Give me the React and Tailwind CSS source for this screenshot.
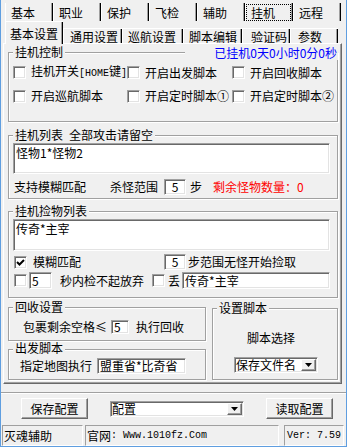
import React from "react"

const cjk = "font-['Noto_Sans_CJK_SC',sans-serif]"
const mono = "font-['Liberation_Mono',monospace]"

// classic win32 3D edges
const sunken =
  "bg-white border border-t-[#a0a0a0] border-l-[#a0a0a0] border-r-white border-b-white shadow-[inset_1px_1px_0_#696969,inset_-1px_-1px_0_#e3e3e3]"
const raised =
  "bg-[#f0f0f0] border border-t-white border-l-white border-r-[#696969] border-b-[#696969] shadow-[inset_-1px_-1px_0_#a0a0a0]"

const topTabs = ["基本", "职业", "保护", "飞检", "辅助", "挂机", "远程"]

const subTabs = [
  { name: "通用设置", cls: "w-[59px] pl-[6px]" },
  { name: "巡航设置", cls: "w-[61px] pl-[5px]" },
  { name: "脚本编辑", cls: "w-[59px] pl-[5px]" },
  { name: "验证码", cls: "w-[48px] pl-[8px]" },
  { name: "参数", cls: "w-[48px] pl-[7px]" },
]

function Check({ checked }) {
  return (
    <div className={`flex-none w-[13px] h-[13px] flex items-center justify-center ${sunken}`}>
      {checked && (
        <svg width="9" height="9" viewBox="0 0 9 9">
          <path d="M1 4 L3.5 6.5 L8 2" stroke="#000" strokeWidth="2" fill="none" />
        </svg>
      )}
    </div>
  )
}

function CheckItem({ label, checked }) {
  return (
    <div className="flex items-center gap-[5px] whitespace-nowrap">
      <Check checked={checked} />
      <span>{label}</span>
    </div>
  )
}

function Arrow() {
  return (
    <svg width="7" height="4" viewBox="0 0 7 4">
      <path d="M0 0 H7 L3.5 4 Z" fill="#000" />
    </svg>
  )
}

function Group({ title, className, titleTop = "-top-[7px]", children }) {
  return (
    <div className={`relative border border-[#a0a0a0] shadow-[inset_1px_1px_0_#fff,1px_1px_0_#fff] ${className}`}>
      <span className={`absolute ${titleTop} left-[4px] px-[2px] leading-[12px] bg-[#f0f0f0] whitespace-nowrap`}>{title}</span>
      {children}
    </div>
  )
}

export default function App() {
  return (
    <div
      className={`w-[347px] h-[447px] bg-[#f0f0f0] border-x border-b border-[#5f9ee0] text-[12px] leading-[14px] text-black overflow-hidden ${cjk}`}
    >
      {/* top tab row */}
      <div className="flex h-[21px] pt-[3px] pl-[4px]">
        {topTabs.map((t) => (
          <div
            key={t}
            className="relative w-[48px] h-[18px] pl-[5px] pt-[2px] leading-[16px] border-l border-white shadow-[inset_-1px_0_0_#000,inset_-2px_0_0_#a0a0a0]"
          >
            {t === "挂机" && <div className="absolute top-[1px] bottom-0 left-0 right-[2px] border border-dotted border-black" />}
            {t}
          </div>
        ))}
      </div>

      {/* second tab row */}
      <div className="flex items-end h-[22px] pl-[4px]">
        <div className="relative z-10 -mb-px w-[58px] h-[23px] pl-[4px] pt-[5px] bg-[#f0f0f0] border-t border-l border-white shadow-[inset_-1px_0_0_#000,inset_-2px_0_0_#a0a0a0]">
          基本设置
        </div>
        {subTabs.map((t) => (
          <div
            key={t.name}
            className={`h-[15px] pt-[1px] leading-[14px] border-t border-l border-white shadow-[inset_-1px_0_0_#000,inset_-2px_0_0_#a0a0a0] ${t.cls}`}
          >
            {t.name}
          </div>
        ))}
      </div>

      {/* tab page */}
      <div className="ml-[2px] w-[339px] h-[341px] border border-t-white border-l-white border-r-[#696969] border-b-[#696969] shadow-[inset_-1px_-1px_0_#a0a0a0] pl-[4px] pt-[8px]">
        <Group title="挂机控制" className="w-[330px] h-[70px]">
          <div className="absolute -top-[7px] left-[176px] -right-px bg-[#f0f0f0] text-right text-[#0000ff] pr-px">
            已挂机0天0小时0分0秒
          </div>
          <div className="grid grid-cols-[114px_105px_1fr] gap-y-[8px] pl-[4px] pt-[11px]">
            <CheckItem
              label={
                <>
                  挂机开关<span className={`${mono} text-[10px]`}>[HOME</span>键<span className={`${mono} text-[10px]`}>]</span>
                </>
              }
            />
            <CheckItem label="开启出发脚本" />
            <CheckItem label="开启回收脚本" />
            <CheckItem label="开启巡航脚本" />
            <CheckItem label="开启定时脚本①" />
            <CheckItem label="开启定时脚本②" />
          </div>
        </Group>

        <Group
          title={
            <>
              挂机列表<span className="ml-[6px]">全部攻击请留空</span>
            </>
          }
          className="mt-[13px] w-[330px] h-[64px]"
        >
          <div className={`ml-[4px] mt-[7px] w-[317px] h-[31px] px-[2px] pt-[2px] ${sunken}`}>怪物1*怪物2</div>
          <div className="flex items-center mt-[5px] h-[16px] pl-[5px] whitespace-nowrap">
            <span>支持模糊匹配</span>
            <span className="ml-[24px]">杀怪范围</span>
            <div className={`ml-[6px] w-[22px] h-[16px] flex items-center justify-center ${sunken}`}>5</div>
            <span className="ml-[4px]">步</span>
            <span className="ml-[11px] text-[#ff0000]">剩余怪物数量：0</span>
          </div>
        </Group>

        <Group title="挂机捡物列表" className="mt-[12px] w-[330px] h-[87px]">
          <div className={`ml-[4px] mt-[7px] w-[317px] h-[32px] px-[2px] pt-[2px] ${sunken}`}>传奇*主宰</div>
          <div className="flex items-center mt-[3px] h-[16px] pl-[5px] whitespace-nowrap">
            <Check checked />
            <span className="ml-[6px]">模糊匹配</span>
            <div className={`ml-[83px] w-[22px] h-[16px] flex items-center justify-center ${sunken}`}>5</div>
            <span className="ml-[2px]">步范围无怪开始捡取</span>
          </div>
          <div className="flex items-center mt-[2px] h-[17px] pl-[5px] whitespace-nowrap">
            <Check />
            <div className={`ml-[2px] w-[23px] h-[17px] pl-[2px] flex items-center ${sunken}`}>5</div>
            <span className="ml-[8px]">秒内检不起放弃</span>
            <div className="ml-[8px]">
              <Check />
            </div>
            <span className="ml-[3px]">丢</span>
            <div className={`ml-[2px] w-[148px] h-[17px] pl-[2px] flex items-center ${sunken}`}>传奇*主宰</div>
          </div>
        </Group>

        <div className="flex mt-[9px]">
          <div className="flex flex-col">
            <Group title="回收设置" className="w-[198px] h-[34px]">
              <div className="flex items-center mt-[12px] h-[14px] pl-[14px] whitespace-nowrap">
                <span>包裹剩余空格≤</span>
                <div className={`ml-[4px] w-[18px] h-[14px] pl-[2px] flex items-center ${sunken}`}>5</div>
                <span className="ml-[7px]">执行回收</span>
              </div>
            </Group>
            <Group title="出发脚本" titleTop="-top-[8px]" className="mt-[8px] w-[198px] h-[31px]">
              <div className="flex items-center mt-[8px] h-[16px] pl-[11px] whitespace-nowrap">
                <span>指定地图执行</span>
                <div className={`ml-[5px] w-[89px] h-[16px] pl-[2px] flex items-center ${sunken}`}>盟重省*比奇省</div>
              </div>
            </Group>
          </div>
          <Group title="设置脚本" className="ml-[6px] mt-[1px] w-[126px] h-[72px]">
            <div className="mt-[22px] pl-[34px]">脚本选择</div>
            <div className={`ml-[21px] mt-[12px] w-[84px] h-[16px] flex items-center justify-between pl-[1px] pr-[1px] ${sunken}`}>
              <span>保存文件名</span>
              <div className={`w-[15px] h-[12px] flex items-center justify-center ${raised}`}>
                <Arrow />
              </div>
            </div>
          </Group>
        </div>
      </div>

      {/* separator */}
      <div className="mt-[8px] h-[2px] border-t border-[#a0a0a0] border-b border-b-white" />

      {/* bottom buttons */}
      <div className="flex items-center mt-[4px] h-[21px] pl-[20px]">
        <div className={`w-[67px] h-[21px] flex items-center justify-center ${raised}`}>保存配置</div>
        <div className={`ml-[22px] w-[134px] h-[16px] flex items-center justify-between pl-[1px] pr-[1px] ${sunken}`}>
          <span>配置</span>
          <div className={`w-[15px] h-[12px] flex items-center justify-center ${raised}`}>
            <Arrow />
          </div>
        </div>
        <div className={`ml-[22px] w-[67px] h-[21px] flex items-center justify-center ${raised}`}>读取配置</div>
      </div>

      {/* status bar */}
      <div className="flex mt-[6px] h-[21px] pl-[1px] whitespace-nowrap">
        <div className="w-[81px] h-[21px] pl-[1px] flex items-center border border-t-[#a0a0a0] border-l-[#a0a0a0] border-r-white border-b-white">
          灭魂辅助
        </div>
        <div className="ml-[2px] w-[194px] h-[21px] pl-[1px] flex items-center border border-t-[#a0a0a0] border-l-[#a0a0a0] border-r-white border-b-white">
          官网<span className={`${mono} text-[10px]`}>: Www.1010fz.Com</span>
        </div>
        <div className={`ml-[5px] w-[60px] h-[21px] pl-[2px] flex items-center border border-t-[#a0a0a0] border-l-[#a0a0a0] border-r-white border-b-white ${mono} text-[10px]`}>
          Ver: 7.59
        </div>
      </div>
    </div>
  )
}
